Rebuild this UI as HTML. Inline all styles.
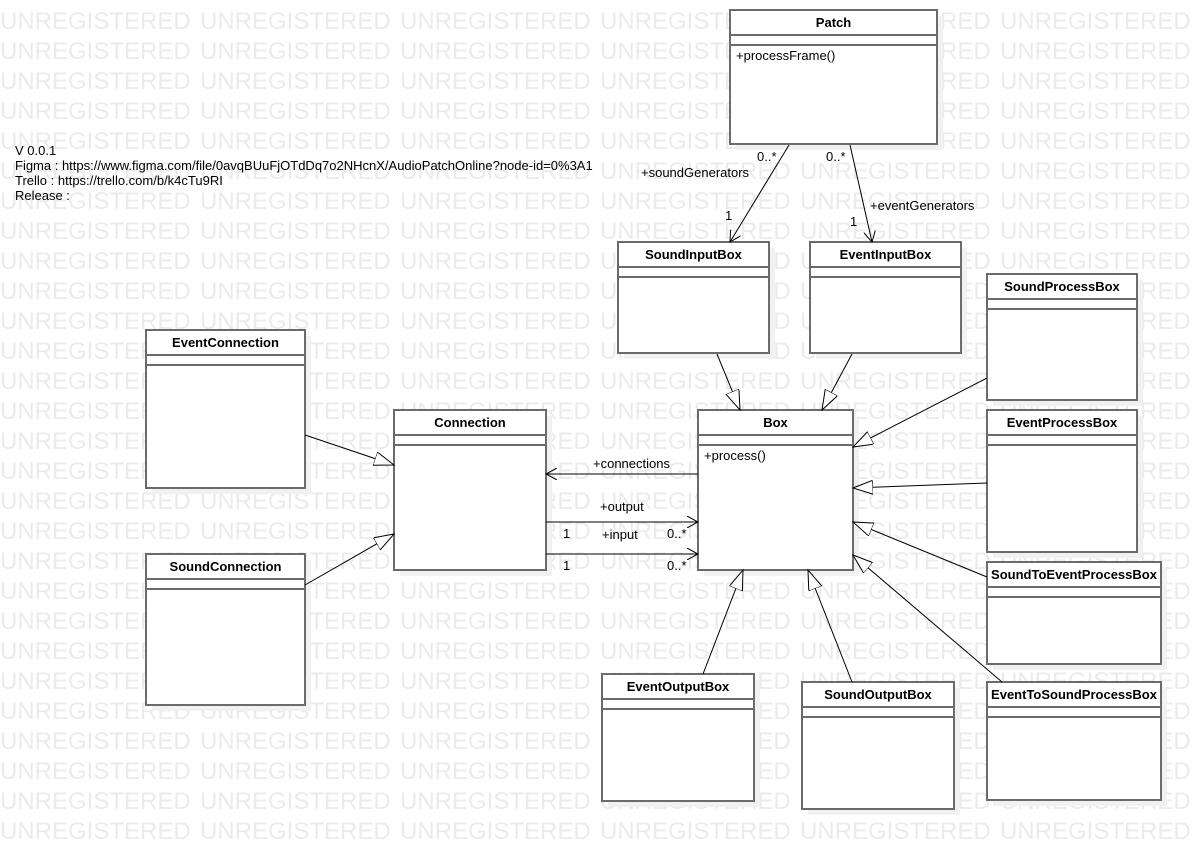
<!DOCTYPE html>
<html><head><meta charset="utf-8"><style>
html,body{margin:0;padding:0;background:#fff;}
svg{display:block;font-family:"Liberation Sans",Arial,sans-serif;}
.wm{font-size:24px;fill:#ebebeb;}
.bt{font-size:13px;font-weight:bold;fill:#000;text-anchor:middle;}
.t{font-size:13px;fill:#000;}
.bx{fill:#fff;stroke:#6b6b6b;stroke-width:2;}
.sh{fill:#f1f1f1;}
.dv{stroke:#6b6b6b;stroke-width:2;}
.ln{stroke:#000;stroke-width:1;fill:none;}
</style></head><body>
<svg width="1201" height="850" viewBox="0 0 1201 850" xmlns="http://www.w3.org/2000/svg">
<defs>
<pattern id="wmp" x="0" y="0" width="200" height="30" patternUnits="userSpaceOnUse"><text class="wm" x="0" y="29">UNREGISTERED</text></pattern>
<marker id="tri" markerUnits="userSpaceOnUse" markerWidth="22" markerHeight="16" refX="20" refY="7" orient="auto"><path d="M0,0 L20,7 L0,14 z" fill="#fff" stroke="#000" stroke-width="1"/></marker>
<marker id="arr" markerUnits="userSpaceOnUse" markerWidth="12" markerHeight="12" refX="11" refY="6" orient="auto"><path d="M0,0 L11,6 L0,12" fill="none" stroke="#000" stroke-width="1"/></marker>
</defs>
<rect x="0" y="0" width="1201" height="850" fill="url(#wmp)"/>
<g class="t">
<text x="15" y="155">V 0.0.1</text>
<text x="15" y="170">Figma : https://www.figma.com/file/0avqBUuFjOTdDq7o2NHcnX/AudioPatchOnline?node-id=0%3A1</text>
<text x="15" y="185">Trello : https://trello.com/b/k4cTu9RI</text>
<text x="15" y="200">Release :</text>
</g>
<g class="sh">
<rect x="736" y="16" width="207" height="134"/>
<rect x="624" y="248" width="151" height="111"/>
<rect x="816" y="248" width="151" height="111"/>
<rect x="993" y="280" width="150" height="126"/>
<rect x="152" y="336" width="159" height="158"/>
<rect x="400" y="416" width="152" height="160"/>
<rect x="704" y="416" width="155" height="160"/>
<rect x="993" y="416" width="150" height="142"/>
<rect x="993" y="568" width="174" height="102"/>
<rect x="152" y="560" width="159" height="151"/>
<rect x="608" y="680" width="152" height="127"/>
<rect x="808" y="688" width="152" height="127"/>
<rect x="993" y="688" width="174" height="118"/>
</g>
<g>
<rect class="bx" x="730" y="10" width="207" height="134"/><line class="dv" x1="730" y1="35" x2="937" y2="35"/><line class="dv" x1="730" y1="45" x2="937" y2="45"/><text class="bt" x="833.5" y="27">Patch</text>
<rect class="bx" x="618" y="242" width="151" height="111"/><line class="dv" x1="618" y1="267" x2="769" y2="267"/><line class="dv" x1="618" y1="277" x2="769" y2="277"/><text class="bt" x="693.5" y="259">SoundInputBox</text>
<rect class="bx" x="810" y="242" width="151" height="111"/><line class="dv" x1="810" y1="267" x2="961" y2="267"/><line class="dv" x1="810" y1="277" x2="961" y2="277"/><text class="bt" x="885.5" y="259">EventInputBox</text>
<rect class="bx" x="987" y="274" width="150" height="126"/><line class="dv" x1="987" y1="299" x2="1137" y2="299"/><line class="dv" x1="987" y1="309" x2="1137" y2="309"/><text class="bt" x="1062" y="291">SoundProcessBox</text>
<rect class="bx" x="146" y="330" width="159" height="158"/><line class="dv" x1="146" y1="355" x2="305" y2="355"/><line class="dv" x1="146" y1="365" x2="305" y2="365"/><text class="bt" x="225.5" y="347">EventConnection</text>
<rect class="bx" x="394" y="410" width="152" height="160"/><line class="dv" x1="394" y1="435" x2="546" y2="435"/><line class="dv" x1="394" y1="445" x2="546" y2="445"/><text class="bt" x="470" y="427">Connection</text>
<rect class="bx" x="698" y="410" width="155" height="160"/><line class="dv" x1="698" y1="435" x2="853" y2="435"/><line class="dv" x1="698" y1="445" x2="853" y2="445"/><text class="bt" x="775.5" y="427">Box</text>
<rect class="bx" x="987" y="410" width="150" height="142"/><line class="dv" x1="987" y1="435" x2="1137" y2="435"/><line class="dv" x1="987" y1="445" x2="1137" y2="445"/><text class="bt" x="1062" y="427">EventProcessBox</text>
<rect class="bx" x="987" y="562" width="174" height="102"/><line class="dv" x1="987" y1="587" x2="1161" y2="587"/><line class="dv" x1="987" y1="597" x2="1161" y2="597"/><text class="bt" x="1074" y="579">SoundToEventProcessBox</text>
<rect class="bx" x="146" y="554" width="159" height="151"/><line class="dv" x1="146" y1="579" x2="305" y2="579"/><line class="dv" x1="146" y1="589" x2="305" y2="589"/><text class="bt" x="225.5" y="571">SoundConnection</text>
<rect class="bx" x="602" y="674" width="152" height="127"/><line class="dv" x1="602" y1="699" x2="754" y2="699"/><line class="dv" x1="602" y1="709" x2="754" y2="709"/><text class="bt" x="678" y="691">EventOutputBox</text>
<rect class="bx" x="802" y="682" width="152" height="127"/><line class="dv" x1="802" y1="707" x2="954" y2="707"/><line class="dv" x1="802" y1="717" x2="954" y2="717"/><text class="bt" x="878" y="699">SoundOutputBox</text>
<rect class="bx" x="987" y="682" width="174" height="118"/><line class="dv" x1="987" y1="707" x2="1161" y2="707"/><line class="dv" x1="987" y1="717" x2="1161" y2="717"/><text class="bt" x="1074" y="699">EventToSoundProcessBox</text>
</g>
<g class="t">
<text x="736" y="60">+processFrame()</text>
<text x="704" y="460">+process()</text>
</g>
<g class="ln">
<line x1="789" y1="145" x2="730" y2="242" marker-end="url(#arr)"/>
<line x1="850" y1="145" x2="872" y2="242" marker-end="url(#arr)"/>
<line x1="698" y1="474" x2="546" y2="474" marker-end="url(#arr)"/>
<line x1="546" y1="522" x2="698" y2="522" marker-end="url(#arr)"/>
<line x1="546" y1="554" x2="698" y2="554" marker-end="url(#arr)"/>
<line x1="717" y1="354" x2="740" y2="410" marker-end="url(#tri)"/>
<line x1="852" y1="354" x2="822" y2="410" marker-end="url(#tri)"/>
<line x1="987" y1="378" x2="853" y2="447" marker-end="url(#tri)"/>
<line x1="987" y1="483" x2="853" y2="488" marker-end="url(#tri)"/>
<line x1="987" y1="577" x2="853" y2="522" marker-end="url(#tri)"/>
<line x1="1002" y1="682" x2="853" y2="555" marker-end="url(#tri)"/>
<line x1="703" y1="674" x2="743" y2="570" marker-end="url(#tri)"/>
<line x1="852" y1="682" x2="808" y2="570" marker-end="url(#tri)"/>
<line x1="305" y1="435" x2="394" y2="465" marker-end="url(#tri)"/>
<line x1="305" y1="585" x2="394" y2="534" marker-end="url(#tri)"/>
</g>
<g class="t">
<text x="757" y="161">0..*</text>
<text x="641" y="177">+soundGenerators</text>
<text x="725" y="220">1</text>
<text x="826" y="161">0..*</text>
<text x="870" y="210">+eventGenerators</text>
<text x="850" y="226">1</text>
<text x="593" y="468">+connections</text>
<text x="600" y="511">+output</text>
<text x="563" y="538">1</text>
<text x="602" y="539">+input</text>
<text x="667" y="538">0..*</text>
<text x="563" y="570">1</text>
<text x="667" y="570">0..*</text>
</g>
</svg>
</body></html>
